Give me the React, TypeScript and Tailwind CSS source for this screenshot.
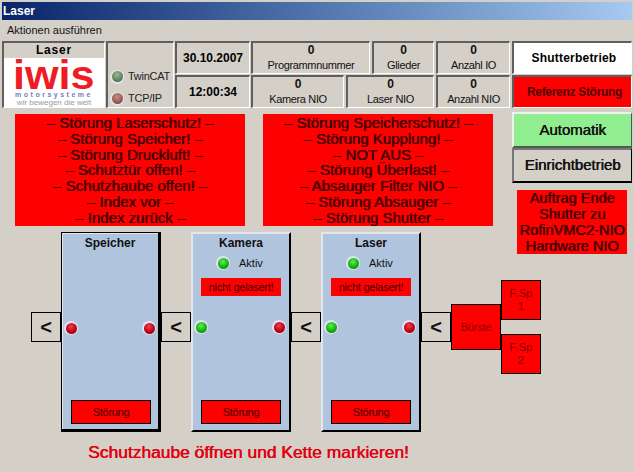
const ui = { fontFamily: '"Liberation Sans", Arial, sans-serif' }

const sunken = "border-t-2 border-l-2 border-b border-r border-t-[#5f5f5f] border-l-[#5f5f5f] border-b-white border-r-white"
const heavyText = "font-normal [text-shadow:0.6px_0_0_currentColor]"

const leftFaults = [
  "– Störung Laserschutz! –",
  "– Störung Speicher! –",
  "– Störung Druckluft! –",
  "– Schutztür offen! –",
  "– Schutzhaube offen! –",
  "– Index vor –",
  "– Index zurück –",
]

const rightFaults = [
  "– Störung Speicherschutz! –",
  "– Störung Kupplung! –",
  "– NOT AUS –",
  "– Störung Überlast! –",
  "– Absauger Filter NIO –",
  "– Störung Absauger –",
  "– Störung Shutter –",
]

const Led = ({ color, size = 14 }: { color: "red" | "green" | "dimGreen" | "dimRed"; size?: number }) => {
  const fills = {
    red: "bg-[radial-gradient(circle_at_45%_35%,#f04050,#c00018_55%,#800010)]",
    green: "bg-[radial-gradient(circle_at_45%_35%,#60f050,#10b010_55%,#087008)]",
    dimGreen: "bg-[radial-gradient(circle_at_45%_35%,#a0b890,#5e8058_60%,#405a3c)]",
    dimRed: "bg-[radial-gradient(circle_at_45%_35%,#c89088,#985850_60%,#704038)]",
  }
  return (
    <div
      className="rounded-full bg-[#dfe6ee] flex items-center justify-center shrink-0"
      style={{ width: size, height: size }}
    >
      <div className={`rounded-full ${fills[color]}`} style={{ width: size - 3, height: size - 3 }} />
    </div>
  )
}

const Counter = ({ value, label, className }: { value: string; label: string; className: string }) => (
  <div className={`${sunken} ${className} h-[33px] flex flex-col items-center text-[11px] tracking-[-0.35px] leading-[15px] text-[#111]`}>
    <div className="font-bold text-[12px]">{value}</div>
    <div className="whitespace-nowrap">{label}</div>
  </div>
)

const Logo = () => (
  <div className="bg-white h-[49px] flex flex-col items-center">
    <div className="text-[#ef1c24] text-[40px] leading-[33px] h-[33px] font-bold scale-x-[1.08] translate-y-[1px]">iwis</div>
    <div className="text-[#7a7ab8] text-[7px] leading-[8px] h-[8px] tracking-[2.5px] font-bold">motorsysteme</div>
    <div className="text-[#9a9a9a] text-[8px] leading-[8px] h-[8px] whitespace-nowrap">wir bewegen die welt</div>
  </div>
)

const FaultPanel = ({ lines, className }: { lines: string[]; className: string }) => (
  <div className={`${className} ${heavyText} w-[230px] h-[112px] bg-[#ff0000] text-[#480000] text-[15px] leading-[15.8px] text-center pt-[1px]`}>
    {lines.map((line) => (
      <div key={line}>{line}</div>
    ))}
  </div>
)

const Arrow = () => (
  <div className="w-[30px] h-[30px] mt-[80px] border border-black bg-[#d4d0c8] flex items-center justify-center text-[20px] font-bold text-[#111] shrink-0">
    &lt;
  </div>
)

const Station = ({ title }: { title: string }) => (
  <div className="w-[100px] h-[200px] bg-[#b0c4de] flex flex-col shrink-0 border-t-2 border-l-2 border-b-2 border-r-2 border-t-[#dfe6ee] border-l-[#dfe6ee] border-b-black border-r-black">
    <div className="text-[12px] leading-[14px] font-bold text-center text-[#111] pt-[2px] h-[16px]">{title}</div>
    <div className="h-[26px] pl-[23px] flex items-center gap-[9px] text-[11px] text-[#111]">
      <Led color="green" />
      <span>Aktiv</span>
    </div>
    <div className="h-[18px] mx-[8px] mt-[2px] bg-[#ff0000] text-[11px] tracking-[-0.25px] leading-[18px] text-center text-[#3a0000]">
      nicht gelasert!
    </div>
    <div className="flex justify-between items-center pl-[1px] pr-[3px] mt-[24px]">
      <Led color="green" />
      <Led color="red" />
    </div>
    <div className="mt-auto mb-[6px] mx-[8px] h-[24px] bg-[#ff0000] border border-black text-[11px] tracking-[-0.3px] leading-[22px] text-center text-[#3a0000]">
      Störung
    </div>
  </div>
)

const SpeicherStation = () => (
  <div className="w-[100px] h-[200px] bg-[#b0c4de] flex flex-col shrink-0 border-t border-l border-r-[3px] border-b-[3px] border-black shadow-[inset_1px_1px_0_#dfe6ee]">
    <div className="text-[12px] leading-[14px] font-bold text-center text-[#111] pt-[3px] h-[17px]">Speicher</div>
    <div className="flex justify-between items-center pl-[2px] pr-[2px] mt-[71px]">
      <Led color="red" />
      <Led color="red" />
    </div>
    <div className="mt-auto mb-[5px] ml-[9px] mr-[7px] h-[24px] bg-[#ff0000] border border-black text-[11px] tracking-[-0.3px] leading-[22px] text-center text-[#3a0000]">
      Störung
    </div>
  </div>
)

export default function App() {
  return (
    <div className="w-[634px] h-[472px] overflow-hidden bg-[#d4d0c8] text-black" style={ui}>
      <div className="pt-[2px] px-[2px]">
        <div className="h-[18px] pl-[1px] bg-gradient-to-r from-[#0a246a] to-[#a6caf0] text-white text-[12px] font-bold leading-[18px]">
          Laser
        </div>
      </div>
      <div className="h-[20px] pl-[7px] text-[11px] leading-[20px] text-[#111]">Aktionen ausführen</div>

      <div className="flex gap-[1px] pl-[2px] pt-[1px]">
        <div className={`${sunken} w-[103px] h-[67px]`}>
          <div className="text-[12px] leading-[15px] font-bold text-center tracking-[0.8px] h-[15px]">Laser</div>
          <Logo />
        </div>
        <div className={`${sunken} w-[68px] h-[67px] flex flex-col justify-end gap-[7px] pb-[1px] pl-[2px] text-[11px] tracking-[-0.25px] leading-[15px] text-[#222]`}>
          <div className="flex items-center gap-[4px]">
            <Led color="dimGreen" />
            <span>TwinCAT</span>
          </div>
          <div className="flex items-center gap-[4px]">
            <Led color="dimRed" />
            <span>TCP/IP</span>
          </div>
        </div>
        <div className="flex flex-col gap-[1px]">
          <div className={`${sunken} w-[75px] h-[33px] flex items-center justify-center text-[12px] font-bold`}>30.10.2007</div>
          <div className={`${sunken} w-[75px] h-[33px] flex items-center justify-center text-[12px] font-bold`}>12:00:34</div>
        </div>
        <div className="flex flex-col gap-[1px]">
          <div className="flex gap-[2px]">
            <Counter value="0" label="Programmnummer" className="w-[119px]" />
            <Counter value="0" label="Glieder" className="w-[62px]" />
            <Counter value="0" label="Anzahl IO" className="w-[74px]" />
          </div>
          <div className="flex gap-[2px]">
            <Counter value="0" label="Kamera NIO" className="w-[93px]" />
            <Counter value="0" label="Laser NIO" className="w-[88px]" />
            <Counter value="0" label="Anzahl NIO" className="w-[74px]" />
          </div>
        </div>
        <div className="flex flex-col gap-[1px] ml-[1px]">
          <div className={`${sunken} w-[120px] h-[33px] bg-white flex items-center justify-center pl-[3px] text-[12px] font-bold tracking-[0.2px]`}>Shutterbetrieb</div>
          <div className={`${sunken} w-[120px] h-[33px] bg-[#ff0000] flex items-center justify-center pl-[4px] text-[12px] font-bold tracking-[-0.3px] text-[#500000]`}>Referenz Störung</div>
        </div>
      </div>

      <div className="flex pt-[4px] pl-[15px]">
        <FaultPanel lines={leftFaults} className="mt-[2px]" />
        <FaultPanel lines={rightFaults} className="mt-[2px] ml-[18px]" />
        <div className="ml-[19px] flex flex-col items-center w-[120px]">
          <div className={`${heavyText} w-[120px] h-[36px] bg-[#90ee90] border-t-2 border-l-2 border-b-2 border-r border-t-[#f0f0f0] border-l-[#f0f0f0] border-b-[#555] border-r-[#555] flex items-center justify-center text-[15px] text-[#111]`}>
            Automatik
          </div>
          <div className={`${heavyText} w-[120px] h-[35px] bg-[#d4d0c8] border-t-2 border-l-2 border-b-2 border-r border-t-[#777] border-l-[#777] border-b-black border-r-black flex items-center justify-center text-[15px] text-[#111]`}>
            Einrichtbetrieb
          </div>
          <div className={`${heavyText} mt-[7px] w-[110px] h-[64px] bg-[#ff0000] text-[14.6px] leading-[16px] text-center text-[#480000]`}>
            <div>Auftrag Ende</div>
            <div>Shutter zu</div>
            <div className="whitespace-nowrap">RofinVMC2-NIO</div>
            <div>Hardware NIO</div>
          </div>
        </div>
      </div>

      <div className="flex items-start pl-[31px] -mt-[22px]">
        <Arrow />
        <SpeicherStation />
        <Arrow />
        <Station title="Kamera" />
        <Arrow />
        <Station title="Laser" />
        <Arrow />
        <div className="mt-[72px] w-[50px] h-[46px] bg-[#ff0000] border border-black flex items-center justify-center text-[11px] tracking-[-0.2px] text-[#8a0000] shrink-0">
          Bürste
        </div>
        <div className="mt-[48px] flex flex-col gap-[14px] shrink-0">
          {["1", "2"].map((n) => (
            <div key={n} className="w-[40px] h-[40px] bg-[#ff0000] border border-black text-[11.5px] leading-[13px] text-center text-[#8a0000] pt-[6px]">
              F.Sp
              <br />
              {n}
            </div>
          ))}
        </div>
      </div>

      <div className={`${heavyText} pl-[88px] pt-[9px] text-[17.4px] leading-[22px] text-[#e00010] whitespace-nowrap`}>
        Schutzhaube öffnen und Kette markieren!
      </div>
    </div>
  )
}
